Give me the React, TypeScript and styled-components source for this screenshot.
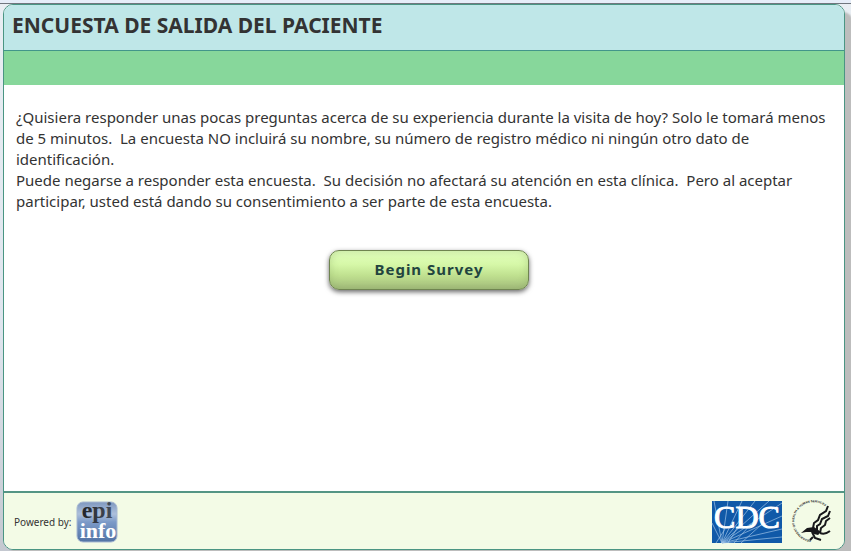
import React from "react";
import styled, { createGlobalStyle } from "styled-components";

const GlobalStyle = createGlobalStyle`
  *, *::before, *::after { box-sizing: border-box; }
  body {
    margin: 0;
    background: #e3e8ef;
    font-family: "Noto Sans", "Open Sans", sans-serif;
    color: #333;
  }
`;

const Page = styled.div`
  min-height: 100vh;
  display: flex;
  flex-direction: column;
  overflow: hidden;
  background: linear-gradient(#e9eef3, #dfe5ee 60%, #c4c8d0);
`;

const TopStrip = styled.div`
  height: 4px;
  background: #e6edf8;
  border-bottom: 1px solid #70767e;
`;

const Card = styled.main`
  flex: 1;
  display: flex;
  flex-direction: column;
  margin: 0 6px 1px 3px;
  border: 1px solid #4a9583;
  border-radius: 10px;
  background: #fff;
  overflow: hidden;
  box-shadow: 8px 8px 2px #bdbdbd;
`;

const Header = styled.header`
  height: 46px;
  padding: 0 8px;
  background: #bfe7e8;
  border-bottom: 1px solid #42968a;
`;

const Title = styled.h1`
  margin: 0;
  font-size: 21px;
  line-height: 40px;
  font-weight: 700;
`;

const Band = styled.div`
  height: 34px;
  background: #87d79b;
`;

const Content = styled.section`
  flex: 1;
  padding: 22px 12px;
`;

const Intro = styled.p`
  margin: 0;
  font-size: 15px;
  line-height: 21px;
  white-space: pre-wrap;
`;

const Actions = styled.div`
  display: flex;
  justify-content: center;
  padding: 38px 0 0 10px;
`;

const BeginButton = styled.button`
  width: 200px;
  height: 40px;
  padding: 0;
  border: 1px solid #6f8450;
  border-radius: 10px;
  background: linear-gradient(#e2ffbd, #d6f8a8 35%, #bfe08f 65%, #a4bd7c);
  box-shadow: 0 2px 5px rgba(0, 0, 0, 0.6), inset 0 0 8px rgba(110, 140, 75, 0.3);
  color: #22443f;
  font: 700 15px/36px "Noto Sans", "Open Sans", sans-serif;
  letter-spacing: 1px;
  cursor: pointer;
`;

const ButtonLabel = styled.span`
  display: block;
  padding-bottom: 2px;
`;

const Footer = styled.footer`
  display: flex;
  align-items: center;
  justify-content: space-between;
  height: 58px;
  padding: 2px 10px 0 10px;
  background: #f3fbe6;
  border-top: 2px solid #549584;
`;

const Powered = styled.div`
  display: flex;
  align-items: center;
  gap: 5px;
  font-size: 10px;
  line-height: 16px;
`;

const Partners = styled.div`
  display: flex;
  align-items: center;
  gap: 8px;
`;

const Drawing = styled.svg`
  display: block;
  overflow: visible;
`;

function EpiInfoLogo() {
  return (
    <Drawing width="42" height="42" viewBox="0 0 42 42" role="img" aria-label="epi info">
      <defs>
        <linearGradient id="epiBg" x1="0" y1="0" x2="0" y2="1">
          <stop offset="0" stopColor="#7f98bf" />
          <stop offset="0.3" stopColor="#adc0dc" />
          <stop offset="0.5" stopColor="#7c9ac8" />
          <stop offset="1" stopColor="#5273a4" />
        </linearGradient>
        <linearGradient id="epiInk" x1="0" y1="0" x2="1" y2="0">
          <stop offset="0" stopColor="#202329" />
          <stop offset="1" stopColor="#454e5c" />
        </linearGradient>
      </defs>
      <rect x="1" y="1" width="40" height="40" rx="6" fill="url(#epiBg)" stroke="#a9bad2" />
      <g fontFamily="Liberation Serif, serif" fontWeight="700" textAnchor="middle">
        <text x="21" y="17" fontSize="24" fill="url(#epiInk)">epi</text>
        <text x="22" y="37" fontSize="22" fill="#fff">info</text>
      </g>
    </Drawing>
  );
}

function CdcLogo() {
  return (
    <Drawing width="70" height="42" viewBox="0 0 70 42" role="img" aria-label="CDC">
      <rect width="70" height="42" fill="#1059a8" />
      <path
        d="M10 42L0 22M10 42L2 0M10 42L16 0M10 42L30 0M10 42L43 0M10 42L57 0M10 42L70 2M10 42L70 15M10 42L70 28M10 42L70 36M4 42L13 28M16 42L27 24M22 42L39 23M29 42L50 23"
        fill="none"
        stroke="#9fc3e6"
        strokeWidth="0.7"
      />
      <text
        x="35"
        y="27"
        textAnchor="middle"
        fontFamily="Liberation Serif, serif"
        fontSize="32"
        fill="#fff"
        stroke="#fff"
        strokeWidth="1"
      >
        CDC
      </text>
    </Drawing>
  );
}

function HhsSeal() {
  return (
    <Drawing width="44" height="44" viewBox="0 0 44 44" role="img" aria-label="Department of Health and Human Services">
      <defs>
        <path id="sealArc" d="M21 40A19 19 0 1 1 36 7" />
      </defs>
      <text fontFamily="Liberation Sans, sans-serif" fontSize="3" fontWeight="700" fill="#222">
        <textPath href="#sealArc">DEPARTMENT OF HEALTH &amp; HUMAN SERVICES · USA</textPath>
      </text>
      <g fill="none" stroke="#18181b" strokeLinecap="butt" strokeLinejoin="miter">
        <path d="M38 6L36 11L30 15L28 20L24 23L23 28" strokeWidth="2" />
        <path d="M40 11L38 16L32 19L30 24L27 26L27 31" strokeWidth="2" />
        <path d="M40 18L36 21L35 25L31 28L30 33" strokeWidth="2" />
        <path d="M22 32L25 38L31 40M23 37L20 40M30 33Q35 35 40 31" strokeWidth="2" />
      </g>
      <path d="M11 33L17 28L24 27L31 32L28 35L24 34L21 32L16 32Z" fill="#18181b" />
    </Drawing>
  );
}

export default function App() {
  return (
    <>
      <GlobalStyle />
      <Page>
        <TopStrip />
        <Card>
          <Header>
            <Title>ENCUESTA DE SALIDA DEL PACIENTE</Title>
          </Header>
          <Band />
          <Content>
            <Intro>
              {"¿Quisiera responder unas pocas preguntas acerca de su experiencia durante la visita de hoy? Solo le tomará menos de 5 minutos.  La encuesta NO incluirá su nombre, su número de registro médico ni ningún otro dato de identificación."}
            </Intro>
            <Intro>
              {"Puede negarse a responder esta encuesta.  Su decisión no afectará su atención en esta clínica.  Pero al aceptar participar, usted está dando su consentimiento a ser parte de esta encuesta."}
            </Intro>
            <Actions>
              <BeginButton type="button">
                <ButtonLabel>Begin Survey</ButtonLabel>
              </BeginButton>
            </Actions>
          </Content>
          <Footer>
            <Powered>
              <span>Powered by:</span>
              <EpiInfoLogo />
            </Powered>
            <Partners>
              <CdcLogo />
              <HhsSeal />
            </Partners>
          </Footer>
        </Card>
      </Page>
    </>
  );
}
